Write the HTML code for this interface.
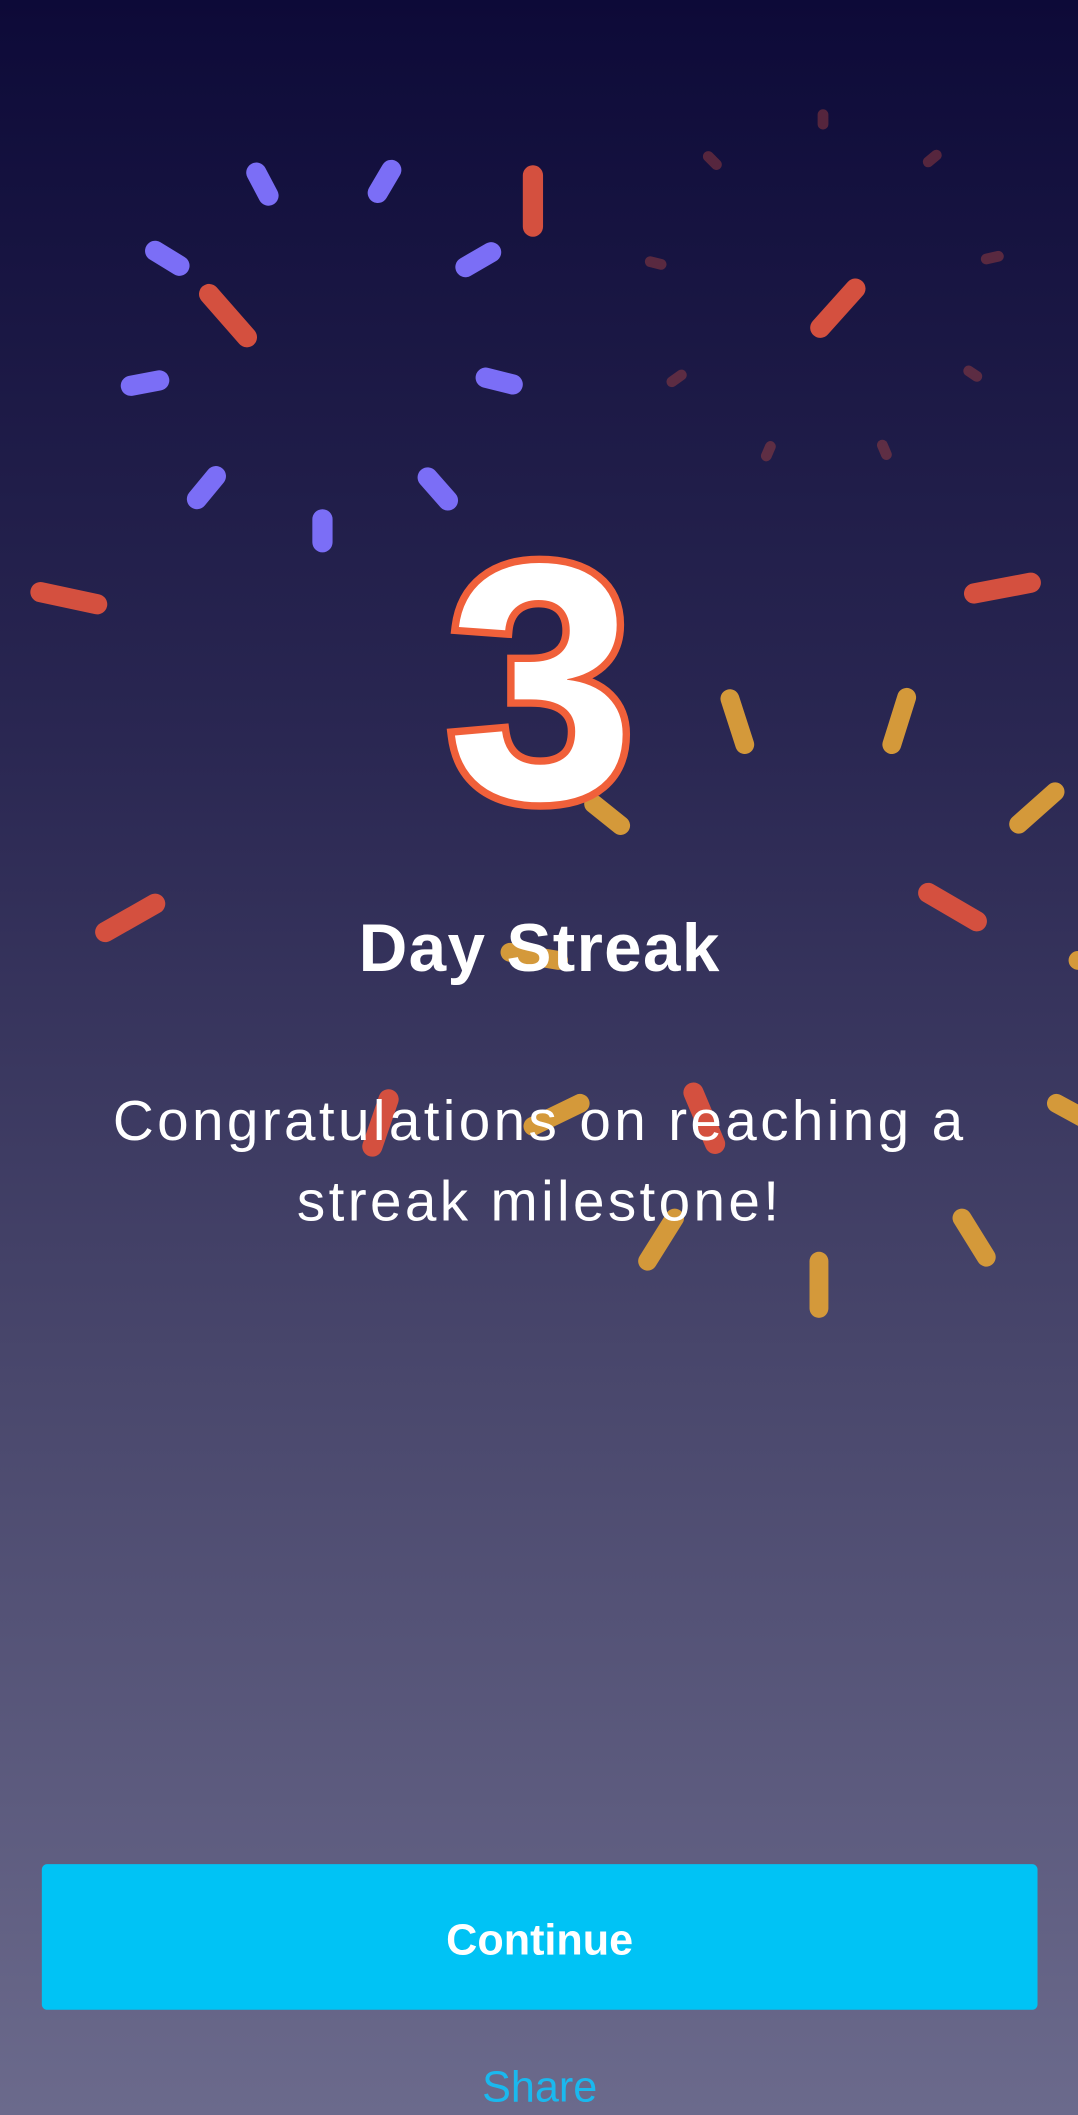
<!DOCTYPE html>
<html><head><meta charset="utf-8"><style>
html,body{margin:0;padding:0;width:1078px;height:2115px;overflow:hidden;background:#2d2a55}
svg{display:block}
</style></head><body>
<svg width="1078" height="2115" viewBox="0 0 799 1568" preserveAspectRatio="none" xmlns="http://www.w3.org/2000/svg">
<defs><linearGradient id="g" x1="0" y1="0" x2="0" y2="1">
<stop offset="0" stop-color="#0d0a38"/><stop offset="0.35" stop-color="#2a2752"/><stop offset="0.65" stop-color="#49476c"/><stop offset="1" stop-color="#6b6a8c"/></linearGradient></defs>
<rect width="799" height="1568" fill="url(#g)"/>
<g stroke-linecap="round" fill="none">
<g stroke="#7b6ef6" stroke-width="15">
<path d="M190 128L199 145M280 143L290 126M115 186L133 197M345 198L364 187M97 286L118 282M360 280L380 285M146 370L160 353M239 385L239 402M317 354L332 371"/>
</g>
<g stroke="#d4503f" stroke-width="15">
<path d="M155 218L183 250M395 130L395 168M608 243L634 214M30 439L72 448M722 440L764 432M78 691L115 670M688 662L724 683M276 850L288 815M514 810L530 848"/>
</g>
<g stroke="#d4503f" stroke-width="8" opacity="0.35">
<path d="M610 85L610 92M525 116L531 122M688 120L694 115M482 194L490 196M731 192L740 190M498 283L505 278M718 275L724 279M568 338L571 331M654 330L657 337"/>
</g>
<g stroke="#d4993a" stroke-width="14">
<path d="M541 518L552 552M661 552L672 517M440 596L460 612M755 611L782 587M378 706L414 712M799 712L805 712M395 835L430 818M783 818L805 830M480 935L500 903M713 903L731 932M607 935L607 970"/>
</g>
</g>
<text x="401" y="592" text-anchor="middle" font-family="Liberation Sans, sans-serif" font-weight="bold" font-size="250" fill="#fff" stroke="#f0603a" stroke-width="11" paint-order="stroke">3</text>
<text x="400" y="720" text-anchor="middle" font-family="Liberation Sans, sans-serif" font-weight="bold" font-size="50" fill="#fff" letter-spacing="1">Day Streak</text>
<text x="400" y="845" text-anchor="middle" font-family="Liberation Sans, sans-serif" font-size="42" fill="#fff" letter-spacing="2.5">Congratulations on reaching a</text>
<text x="400" y="905" text-anchor="middle" font-family="Liberation Sans, sans-serif" font-size="42" fill="#fff" letter-spacing="2.5">streak milestone!</text>
<rect x="31" y="1382" width="738" height="108" rx="4" fill="#00c3f5"/>
<text x="400" y="1449" text-anchor="middle" font-family="Liberation Sans, sans-serif" font-weight="bold" font-size="32" fill="#fff">Continue</text>
<text x="400" y="1558" text-anchor="middle" font-family="Liberation Sans, sans-serif" font-size="32" fill="#1ab8ee">Share</text>
</svg>
</body></html>
